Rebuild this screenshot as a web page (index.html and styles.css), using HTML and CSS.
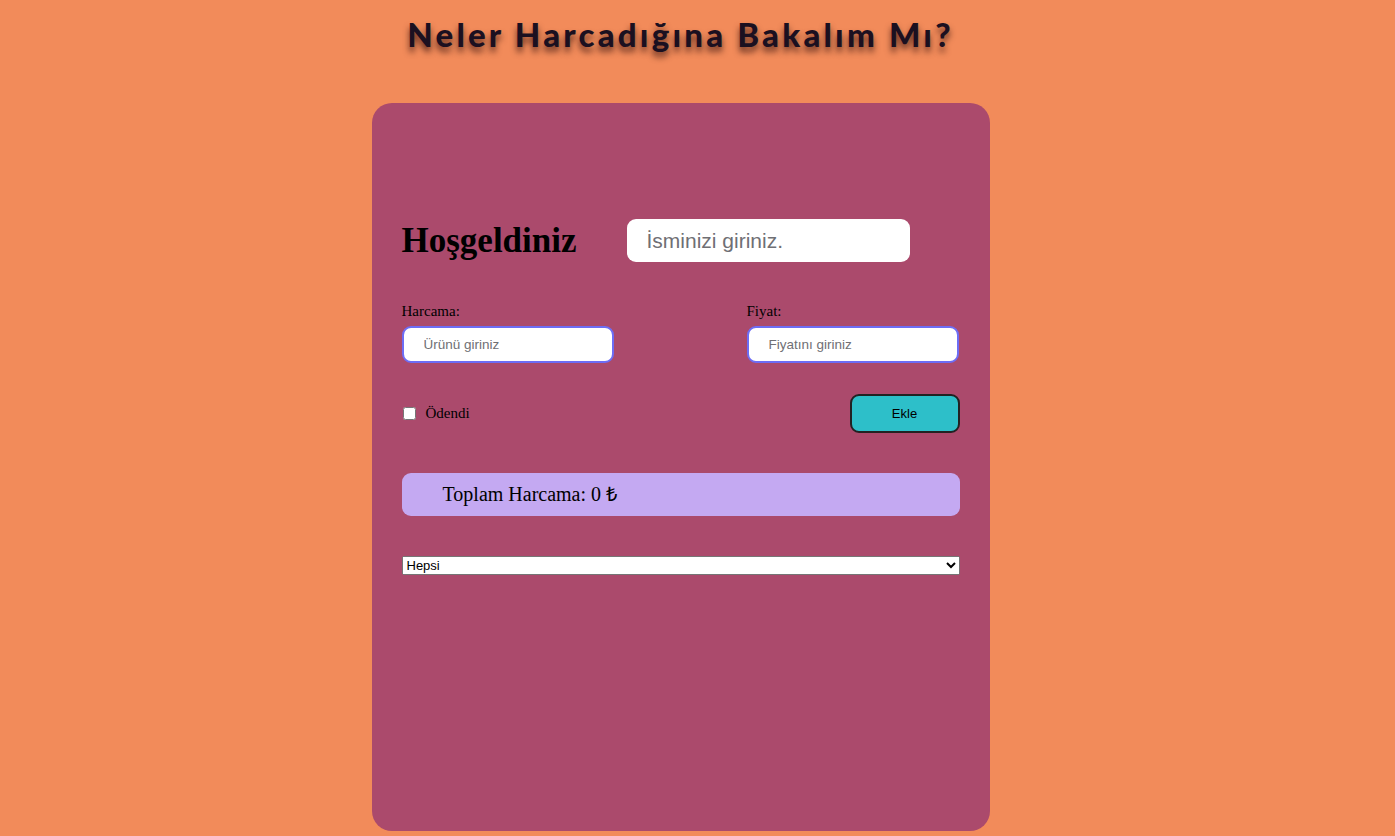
FILE: index.html
```html
<!DOCTYPE html>
<html lang="tr">
<head>
<meta charset="utf-8">
<title>Harcama</title>
<link rel="stylesheet" href="styles.css">
</head>
<body>
<h1 class="title">Neler Harcadığına Bakalım Mı?</h1>
<main class="card">
  <div class="welcome">
    <h2 class="welcome-title">Hoşgeldiniz</h2>
    <input class="name-input" type="text" placeholder="İsminizi giriniz.">
  </div>
  <div class="fields">
    <div class="field">
      <label class="field-label">Harcama:</label>
      <input class="field-input" type="text" placeholder="Ürünü giriniz">
    </div>
    <div class="field">
      <label class="field-label">Fiyat:</label>
      <input class="field-input" type="text" placeholder="Fiyatını giriniz">
    </div>
  </div>
  <div class="actions">
    <label class="check"><input type="checkbox" class="check-box"><span>Ödendi</span></label>
    <button class="add-btn">Ekle</button>
  </div>
  <div class="total">Toplam Harcama: 0 ₺</div>
  <select class="filter"><option>Hepsi</option></select>
</main>
</body>
</html>
```
FILE: styles.css
```css
html, body {
  margin: 0;
  padding: 0;
}
body {
  background: #f28b5a;
  font-family: "Liberation Serif", "Times New Roman", serif;
  min-height: 836px;
  padding-right: 34px;
}
.title {
  margin: 0;
  padding-top: 15px;
  text-align: center;
  font-family: "Lato", "Open Sans", sans-serif;
  font-weight: 900;
  font-size: 33px;
  letter-spacing: 3.2px;
  color: #1b1020;
  line-height: 38px;
  text-shadow: 0 5px 6px rgba(40, 10, 10, 0.7);
}
.card {
  width: 618px;
  height: 728px;
  box-sizing: border-box;
  margin: 50px auto 0;
  background: #ab4a6c;
  border-radius: 20px;
  padding: 116px 30px 0;
}
.welcome {
  display: flex;
  align-items: center;
  gap: 50px;
}
.welcome-title {
  margin: 0;
  font-size: 35px;
  font-weight: bold;
  color: #000;
}
.name-input {
  width: 283px;
  height: 43px;
  box-sizing: border-box;
  border: none;
  border-radius: 9px;
  padding: 0 20px;
  font-family: "Liberation Sans", Arial, sans-serif;
  font-size: 21px;
  outline: none;
  background: #fff;
}
.name-input::placeholder { color: #6f6f74; }
.fields {
  display: flex;
  justify-content: space-between;
  margin-top: 40px;
  padding-right: 1px;
}
.field {
  display: flex;
  flex-direction: column;
  width: 212px;
}
.field-label {
  font-size: 15px;
  line-height: 18px;
  color: #000;
  margin-bottom: 6px;
}
.field-input {
  height: 37px;
  box-sizing: border-box;
  border: 2px solid #6d6df5;
  border-radius: 9px;
  padding: 0 20px;
  font-family: "Liberation Sans", Arial, sans-serif;
  font-size: 13.5px;
  background: #fff;
  outline: none;
}
.field-input::placeholder { color: #6f6f74; }
.actions {
  display: flex;
  justify-content: space-between;
  align-items: center;
  margin-top: 31px;
}
.check {
  display: flex;
  align-items: center;
  font-size: 15px;
  color: #000;
}
.check-box {
  width: 13px;
  height: 13px;
  margin: 0 10px 0 1px;
}
.add-btn {
  width: 110px;
  height: 39px;
  box-sizing: border-box;
  background: #2dbfc9;
  border: 2px solid #222;
  border-radius: 9px;
  font-family: "Liberation Sans", Arial, sans-serif;
  font-size: 13px;
  color: #000;
}
.total {
  margin-top: 40px;
  height: 43px;
  box-sizing: border-box;
  background: #c4a9f2;
  border-radius: 9px;
  padding-left: 41px;
  font-size: 20px;
  line-height: 43px;
  color: #000;
}
.filter {
  display: block;
  margin-top: 40px;
  width: 558px;
  height: 19px;
  font-family: "Liberation Sans", Arial, sans-serif;
  font-size: 13px;
}
```
